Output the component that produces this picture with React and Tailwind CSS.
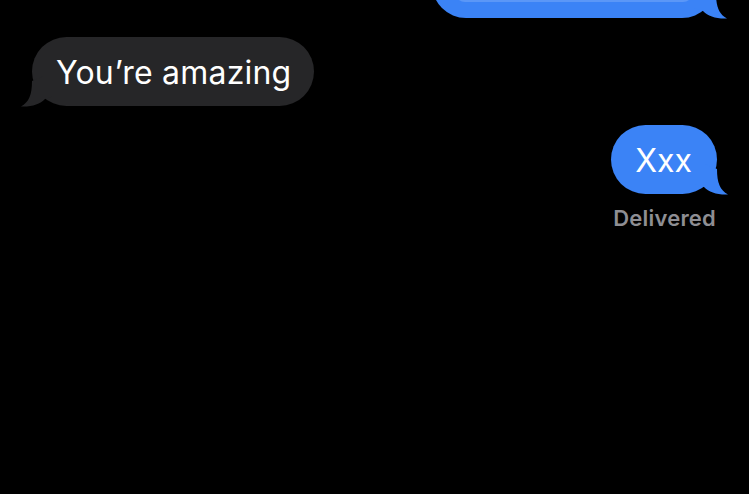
import React from "react";

function Tail({ color, left }) {
  return (
    <svg
      width="34"
      height="31"
      viewBox="0 0 34 31"
      className={
        left
          ? "absolute bottom-[-1px] left-[-12px] scale-x-[-1]"
          : "absolute bottom-[-1px] right-[-12px]"
      }
    >
      <path
        d="M0 0 L10 0 L22 5 C22 19 25 26 33 30.5 C22 31 14 28 9 23 L0 20 Z"
        fill={color}
      />
    </svg>
  );
}

export default function App() {
  const font = { fontFamily: "Inter, 'Noto Sans', 'Liberation Sans', sans-serif" };
  return (
    <div
      className="w-[749px] h-[494px] bg-black overflow-hidden flex flex-col"
      style={font}
    >
      <div className="flex justify-end pr-[33px] -mt-[82px]">
        <div className="relative w-[284px] h-[100px] rounded-[34px] bg-[#3b83f6] flex justify-center">
          <div className="w-[238px] h-[84px] rounded-b-[10px] bg-[#5b97f7]" />
          <Tail color="#3b83f6" />
        </div>
      </div>

      <div className="flex pl-[32px] mt-[19px]">
        <div className="relative h-[69px] pl-[24px] pr-[23px] pt-[2px] rounded-[35px] bg-[#262628] flex items-center">
          <span className="text-white text-[32px] leading-none tracking-[0.2px]">
            You’re amazing
          </span>
          <Tail color="#262628" left />
        </div>
      </div>

      <div className="flex justify-end pr-[32px] mt-[19px]">
        <div className="relative h-[69px] pl-[24px] pr-[25px] pt-[2px] rounded-[35px] bg-[#3b83f6] flex items-center">
          <span className="text-white text-[32px] leading-none">Xxx</span>
          <Tail color="#3b83f6" />
        </div>
      </div>

      <div className="flex justify-end pr-[33px] mt-[11px]">
        <span className="text-[#8e8e93] text-[22px] font-semibold leading-[26px] tracking-[0.2px]">
          Delivered
        </span>
      </div>
    </div>
  );
}
